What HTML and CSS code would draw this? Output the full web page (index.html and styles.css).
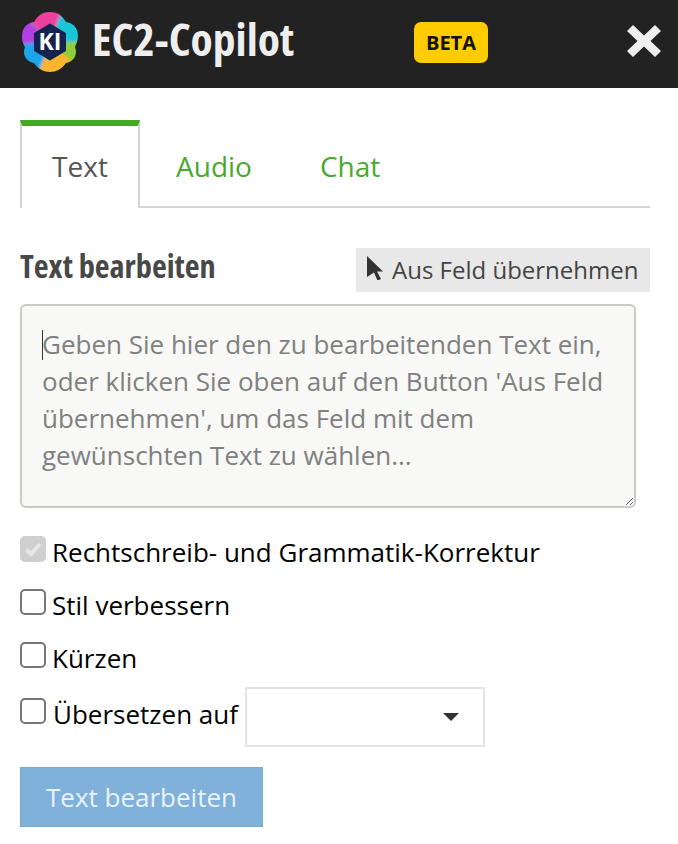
FILE: index.html
```html
<!DOCTYPE html>
<html lang="de">
<head>
<meta charset="utf-8">
<title>EC2-Copilot</title>
<link rel="stylesheet" href="styles.css">
</head>
<body>
<header class="topbar">
  <svg class="logo" viewBox="0 0 56 60" aria-hidden="true">
    <defs><filter id="soft" x="-10%" y="-10%" width="120%" height="120%"><feGaussianBlur stdDeviation="1.6"/></filter></defs>
    <clipPath id="blob"><path d="M28 0C37 0 41 5 44 10C52 11 56 17 56 24C56 29 54 32 53 35C56 42 52 50 44 51C40 57 34 60 28 60C22 60 16 57 12 51C4 50 0 42 3 35C0 30 0 27 0 24C0 17 4 11 12 10C15 5 19 0 28 0Z"/></clipPath>
    <g clip-path="url(#blob)">
      <g filter="url(#soft)">
        <rect x="-2" y="-2" width="60" height="64" fill="#22b8e0"/>
        <path d="M28 30L-4 -4H40L44 12Z" fill="#ef3f9f"/>
        <path d="M28 30L-4 -2V34Z" fill="#b23fe0"/>
        <path d="M28 30L40 -2L60 4V30Z" fill="#1fc5d6"/>
        <path d="M28 30H60V50L48 56Z" fill="#8fce38"/>
        <path d="M28 30L50 50L36 64H14Z" fill="#fbb52e"/>
        <path d="M28 30L16 62L-4 50V32Z" fill="#1ea6ea"/>
      </g>
    </g>
    <path d="M28 12.500L43 21.500V38.500L28 47.500L13 38.500V21.500Z" fill="#14234f" stroke="#14234f" stroke-width="2" stroke-linejoin="round"/>
    <text class="logo-text" x="28" y="38" text-anchor="middle">KI</text>
  </svg>
  <h1 class="title"><span class="narrow">EC2-Copilot</span></h1>
  <span class="beta">BETA</span>
  <svg class="close" viewBox="0 0 34 32" aria-hidden="true"><path d="M6 0L17 10.500L28 0L34 6L23.500 16L34 26L28 32L17 21.500L6 32L0 26L10.500 16L0 6Z" fill="#eeeeee"/></svg>
</header>

<main class="content">
  <nav class="tabs">
    <a class="tab active">Text</a>
    <a class="tab">Audio</a>
    <a class="tab">Chat</a>
  </nav>

  <div class="headrow">
    <h2 class="heading"><span class="narrow">Text bearbeiten</span></h2>
    <button class="pick" type="button">
      <svg class="cursor" viewBox="0 0 16 24" aria-hidden="true"><path d="M0 0L16 15.500H10L14 23L10.500 24.500L7 16.500L0 21Z" fill="#333"/></svg>
      Aus Feld übernehmen
    </button>
  </div>

  <div class="area-wrap">
    <textarea class="area" placeholder="Geben Sie hier den zu bearbeitenden Text ein, oder klicken Sie oben auf den Button 'Aus Feld übernehmen', um das Feld mit dem gewünschten Text zu wählen..."></textarea>
    <span class="caret"></span>
  </div>

  <ul class="options">
    <li class="option"><span class="box checked"><svg viewBox="0 0 26 26" aria-hidden="true"><path d="M6.500 13.500L11 18L20 8" fill="none" stroke="#e6e6e6" stroke-width="4"/></svg></span>Rechtschreib- und Grammatik-Korrektur</li>
    <li class="option"><span class="box"></span>Stil verbessern</li>
    <li class="option"><span class="box"></span>Kürzen</li>
    <li class="option option-select"><span class="box"></span><span class="select-label">Übersetzen auf</span><span class="select"><span class="arrow"></span></span></li>
  </ul>

  <button class="submit" type="button">Text bearbeiten</button>
</main>
</body>
</html>
```
FILE: styles.css
```css
* { box-sizing: border-box; }
html, body { margin: 0; padding: 0; background: #fff; }
body { font-family: "Open Sans", "Liberation Sans", sans-serif; color: #000; overflow: hidden; }

.topbar { height: 88px; background: #222; display: flex; align-items: center; padding: 0 17px 0 22px; }
.logo { width: 56px; height: 60px; flex: none; margin-top: -4px; }
.logo-text { font: 700 23px "Open Sans", sans-serif; fill: #fff; }
.narrow { display: inline-block; font-stretch: condensed; white-space: nowrap; }
.title { margin: -13px 0 0 14px; width: 322px; flex: none; font-size: 45.500px; line-height: 60px; font-weight: 700; color: #eee; }
.beta { width: 74px; height: 41px; background: #ffcc00; border-radius: 7px; color: #111; font-weight: 700; font-size: 20px; display: flex; align-items: center; justify-content: center; margin-top: -4px; flex: none; }
.close { width: 34px; height: 32px; margin-left: auto; margin-top: -6px; flex: none; }

.content { padding: 32px 28px 0 20px; }
.tabs { display: flex; height: 88px; border-bottom: 2px solid #d4d4d4; }
.tab { font-size: 28px; line-height: 38px; padding: 27px 32px 0 36px; color: #4aa82e; }
.tab.active { width: 120px; padding: 21px 0 0; text-align: center; color: #555; border-top: 6px solid #44aa22; border-left: 2px solid #d4d4d4; border-right: 2px solid #d4d4d4; height: 88px; background: #fff; }

.headrow { display: flex; justify-content: space-between; align-items: center; margin-top: 40px; height: 44px; }
.heading { margin: -10px 0 0; font-size: 32.300px; line-height: 44px; font-weight: 700; color: #484848; }
.pick { width: 294px; height: 44px; background: #e8e8e8; border: 0; padding: 0 0 2px 11px; display: flex; align-items: center; font-family: inherit; font-size: 24px; color: #444; white-space: nowrap; }
.cursor { width: 16px; height: 24px; margin-right: 9px; margin-top: -2px; flex: none; }

.area-wrap { position: relative; margin-top: 12px; width: 616px; height: 204px; }
.area { display: block; width: 616px; height: 204px; border: 2px solid #cacaca; border-radius: 6px; background: #f8f8f7; padding: 20px 20px; font-family: inherit; font-size: 26px; line-height: 37px; color: #333; outline: 0; }
.area::placeholder { color: #808080; opacity: 1; }
.caret { position: absolute; left: 22px; top: 26px; width: 1px; height: 30px; background: #333; }

.options { list-style: none; margin: 22px 0 0; padding: 0; }
.option { display: flex; align-items: center; height: 44px; margin-bottom: 9px; font-size: 26px; }
.box { width: 26px; height: 26px; border: 2px solid #767676; border-radius: 5px; background: #fff; margin-right: 6px; flex: none; margin-top: -6px; }
.box.checked { border: 0; background: #cfcfcf; }
.box svg { display: block; width: 26px; height: 26px; }
.option-select { height: 60px; margin: -2px 0 20px; }
.option-select .box { margin-top: -12px; }
.select-label { margin-top: -6px; margin-left: 1px; }
.select { width: 240px; height: 60px; border: 2px solid #e4e4e4; margin-left: 7px; display: flex; align-items: center; justify-content: flex-end; padding-right: 24px; }
.arrow { width: 0; height: 0; border-left: 8px solid transparent; border-right: 8px solid transparent; border-top: 8px solid #333; }

.submit { display: block; width: 243px; height: 60px; background: #7fb1da; border: 1px solid #77a9d2; color: #e9f3fa; font-family: inherit; font-size: 26px; padding: 0; }
```
